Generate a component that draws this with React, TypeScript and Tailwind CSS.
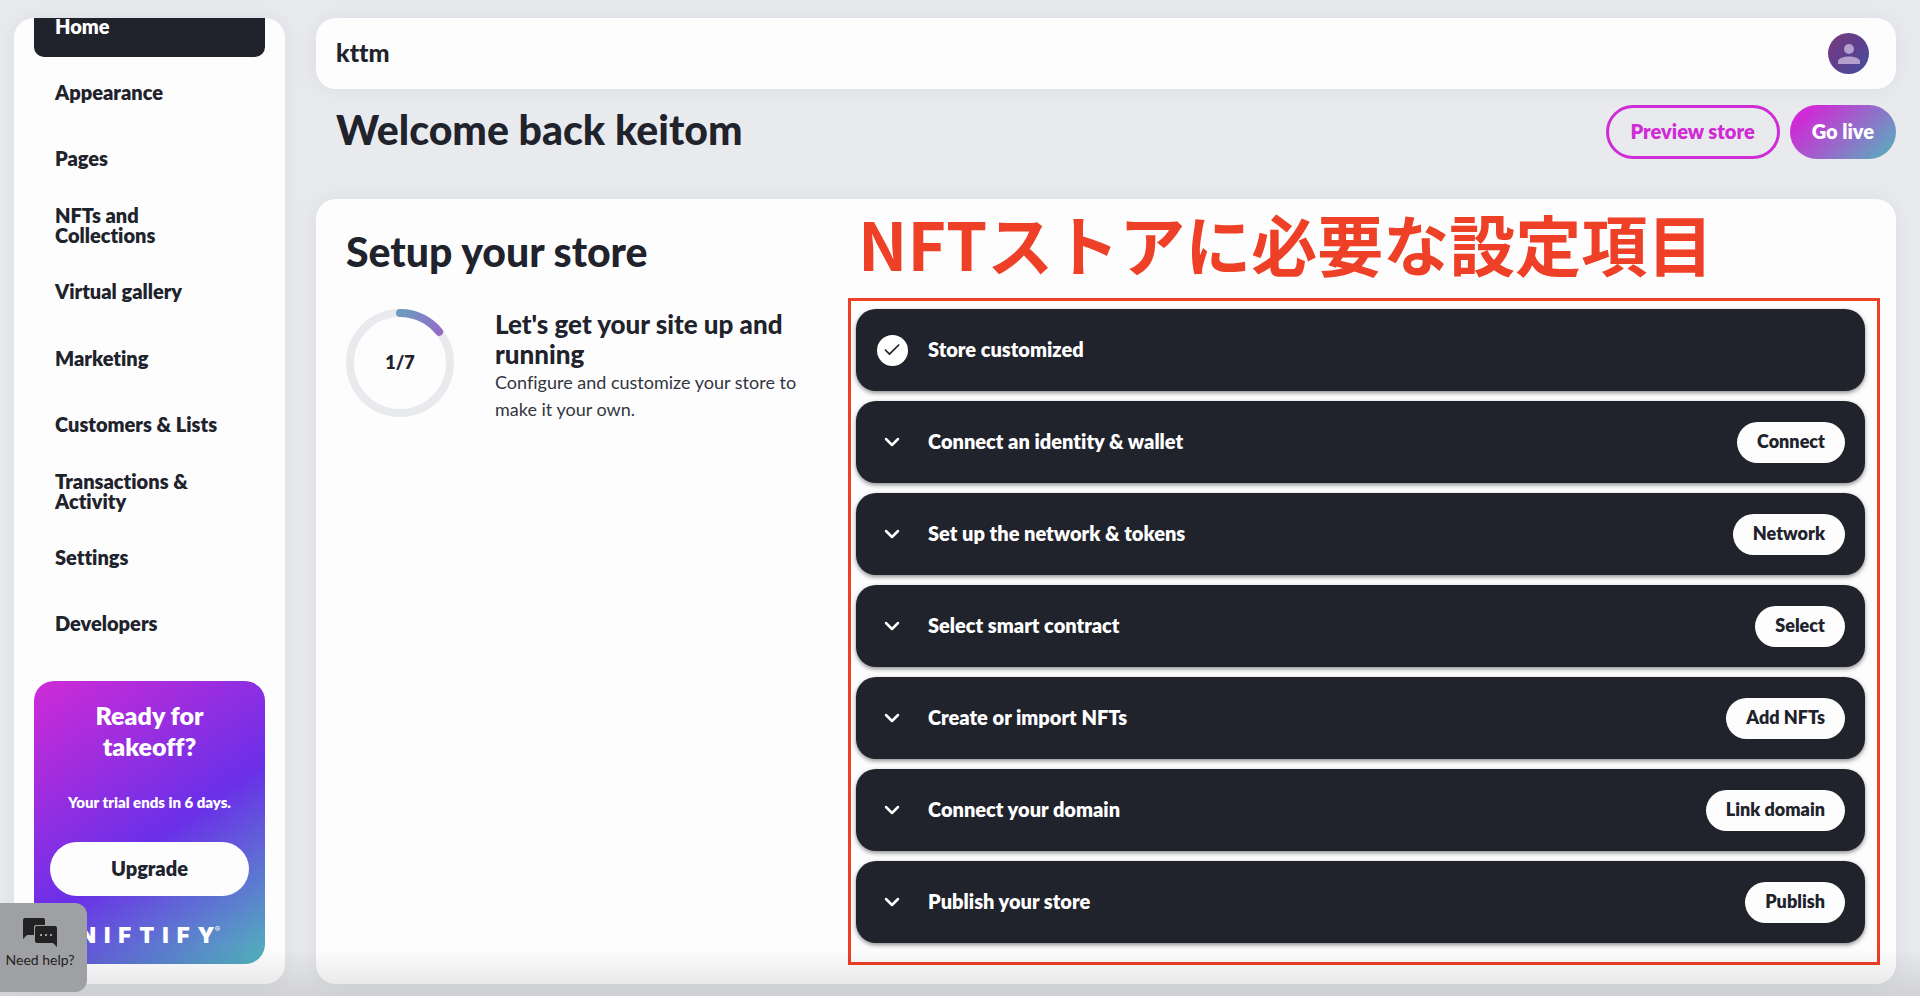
import React from 'react';
import { Check, ChevronDown } from 'lucide-react';

interface Step {
  label: string;
  action?: string;
}

const NAV_ITEMS = [
  'Home',
  'Appearance',
  'Pages',
  'NFTs and Collections',
  'Virtual gallery',
  'Marketing',
  'Customers & Lists',
  'Transactions & Activity',
  'Settings',
  'Developers',
];

const STEPS: Step[] = [
  { label: 'Store customized' },
  { label: 'Connect an identity & wallet', action: 'Connect' },
  { label: 'Set up the network & tokens', action: 'Network' },
  { label: 'Select smart contract', action: 'Select' },
  { label: 'Create or import NFTs', action: 'Add NFTs' },
  { label: 'Connect your domain', action: 'Link domain' },
  { label: 'Publish your store', action: 'Publish' },
];

function Wordmark() {
  return (
    <div className="flex items-center justify-center gap-2 text-[22px] leading-6 font-black font-['Inter',sans-serif]">
      {'NIFTIFY'.split('').map((letter, index) => (
        <span key={index}>{letter}</span>
      ))}
      <span className="-ml-2 self-start text-[8px] leading-3 font-normal">®</span>
    </div>
  );
}

function Sidebar() {
  return (
    <aside className="flex w-[271px] shrink-0 flex-col overflow-hidden rounded-[20px] bg-[#fdfdfd] px-5 pb-5 shadow-[0_0_24px_rgba(32,34,44,0.06)]">
      {/* the list is scrolled a little, so the first item is cut by the panel */}
      <nav className="-mt-[22px] mb-[26px] flex flex-1 flex-col justify-between">
        {NAV_ITEMS.map((item, index) => (
          <a
            key={item}
            href="#"
            className={`flex h-[61px] items-center rounded-[10px] pr-9 pb-[2px] pl-[21px] text-[20px] leading-5 font-extrabold ${
              index === 0 ? 'bg-[#20222c] text-white' : 'text-[#20222c]'
            }`}
          >
            {item}
          </a>
        ))}
      </nav>

      <section className="flex h-[283px] flex-col items-center rounded-[20px] bg-[linear-gradient(145deg,#cf2bd6_0%,#6a30e8_55%,#52b5bc_100%)] px-4 pt-[19px] text-center text-white">
        <h2 className="w-[150px] text-[25px] leading-[31px] font-extrabold">Ready for takeoff?</h2>
        <p className="mt-[30px] text-[15px] leading-5 font-extrabold">Your trial ends in 6 days.</p>
        <button className="mt-[30px] h-[54px] w-full rounded-full bg-[#fdfdfd] pb-[2px] text-[20px] font-extrabold text-[#20222c]">
          Upgrade
        </button>
        <div className="mt-[27px]">
          <Wordmark />
        </div>
      </section>
    </aside>
  );
}

function Progress() {
  return (
    <div className="relative size-[108px] shrink-0">
      <svg viewBox="0 0 108 108" className="size-full" fill="none" strokeWidth="8">
        <defs>
          <linearGradient id="arc" x1="54" y1="4" x2="94" y2="24" gradientUnits="userSpaceOnUse">
            <stop stopColor="#6b9cc0" />
            <stop offset="1" stopColor="#946cc8" />
          </linearGradient>
        </defs>
        <circle cx="54" cy="54" r="50" stroke="#e9eaee" />
        <path d="M54 4A50 50 0 0 1 93.1 22.8" stroke="url(#arc)" strokeLinecap="round" />
      </svg>
      <span className="absolute inset-0 flex items-center justify-center pb-[2px] text-[18px] font-extrabold">1/7</span>
    </div>
  );
}

function StepCard({ label, action }: Step) {
  return (
    <li className="flex h-[82px] items-center rounded-[20px] bg-[#20222c] px-5 text-white shadow-[0_2px_4px_rgba(32,34,44,0.5)]">
      <span className="flex w-8 shrink-0 justify-center">
        {action ? (
          <ChevronDown className="size-6" strokeWidth={2.5} />
        ) : (
          <span className="flex size-[31px] items-center justify-center rounded-full bg-white text-[#20222c]">
            <Check className="size-5" strokeWidth={2} />
          </span>
        )}
      </span>
      <span className="ml-5 flex-1 pb-[2px] text-[20px] font-extrabold">{label}</span>
      {action && (
        <button className="h-[41px] rounded-full bg-[#fdfdfd] px-5 pb-[2px] text-[18px] font-extrabold text-[#20222c]">
          {action}
        </button>
      )}
    </li>
  );
}

function HelpButton() {
  return (
    <button className="fixed bottom-1 left-0 flex h-[89px] w-[87px] flex-col items-center rounded-r-[12px] bg-[#9fa0a4] pt-[15px] pr-[7px] text-[14px] leading-5 text-[#222]">
      <svg viewBox="0 0 34 30" className="h-[30px] w-[34px]">
        <path d="M2 0h18a2 2 0 0 1 2 2v5H13a2 2 0 0 0-2 2v8H4l-4 4V2a2 2 0 0 1 2-2z" fill="#222" />
        <path d="M14 8h18a2 2 0 0 1 2 2v19l-4-4H14a2 2 0 0 1-2-2V10a2 2 0 0 1 2-2z" fill="#222" />
        <path d="M17 16h2v2h-2zm5 0h2v2h-2zm5 0h2v2h-2z" fill="#9fa0a4" />
      </svg>
      <span className="mt-[2px]">Need help?</span>
    </button>
  );
}

export default function App() {
  return (
    <div className="flex min-h-screen gap-[31px] bg-[#e9eaee] pt-[18px] pr-6 pb-3 pl-[14px] font-['Lato',sans-serif] text-[#20222c] [font-variant-ligatures:none]">
      <Sidebar />

      <div className="flex min-w-0 flex-1 flex-col">
        <header className="flex h-[71px] items-center justify-between rounded-[20px] bg-[#fdfdfd] pr-[27px] pl-5 shadow-[0_0_24px_rgba(32,34,44,0.06)]">
          <span className="pb-[2px] text-[25px] font-black">kttm</span>
          <button
            aria-label="Account"
            className="flex size-[41px] items-center justify-center rounded-full bg-[linear-gradient(135deg,#793a80,#5f3f8c_50%,#4451a0)]"
          >
            <svg viewBox="0 0 22 22" className="size-[22px]" fill="#b3a0cc">
              <circle cx="11" cy="6" r="5" />
              <path d="M0 21v-2.500C0 15 6 13.500 11 13.500S22 15 22 18.500V21z" />
            </svg>
          </button>
        </header>

        <div className="flex items-center justify-between pt-4 pl-5">
          <h1 className="pb-1 text-[41px] leading-[50px] font-black">Welcome back keitom</h1>
          <div className="flex gap-[10px] text-[20px] font-extrabold">
            <button className="h-[54px] rounded-full border-3 border-[#cf2bd6] px-[22px] pb-[2px] text-[#cf2bd6]">
              Preview store
            </button>
            <button className="h-[54px] rounded-full bg-[linear-gradient(135deg,#cf2bd6_15%,#52b5bc)] px-[22px] pb-[2px] text-white">
              Go live
            </button>
          </div>
        </div>

        <main className="mt-10 flex flex-1 rounded-[20px] bg-[#fdfdfd] pr-4 pb-[19px] pl-[30px] shadow-[0_0_24px_rgba(32,34,44,0.06)]">
          <section className="w-[502px] shrink-0 pt-[26px]">
            <h2 className="text-[41px] leading-[54px] font-black">Setup your store</h2>
            <div className="mt-[30px] flex gap-[41px]">
              <Progress />
              <div>
                <h3 className="w-[310px] text-[26px] leading-[30px] font-black">
                  Let's get your site up and running
                </h3>
                <p className="w-[310px] text-[18px] leading-[27px] text-[#33353f]">
                  Configure and customize your store to make it your own.
                </p>
              </div>
            </div>
          </section>

          <section className="flex min-w-0 flex-1 flex-col">
            <h2 className="pb-3 pl-[10px] font-['Noto_Sans_CJK_JP',sans-serif] text-[66px] leading-[87px] font-bold whitespace-nowrap text-[#ee4026]">
              NFTストアに必要な設定項目
            </h2>
            <ul className="flex flex-1 flex-col gap-[10px] border-[3px] border-[#ee4026] py-2 pr-3 pl-[5px]">
              {STEPS.map((step) => (
                <StepCard key={step.label} {...step} />
              ))}
            </ul>
          </section>
        </main>
      </div>

      <div className="pointer-events-none fixed inset-x-0 bottom-0 h-12 bg-linear-to-t from-black/10 to-transparent" />
      <HelpButton />
    </div>
  );
}
